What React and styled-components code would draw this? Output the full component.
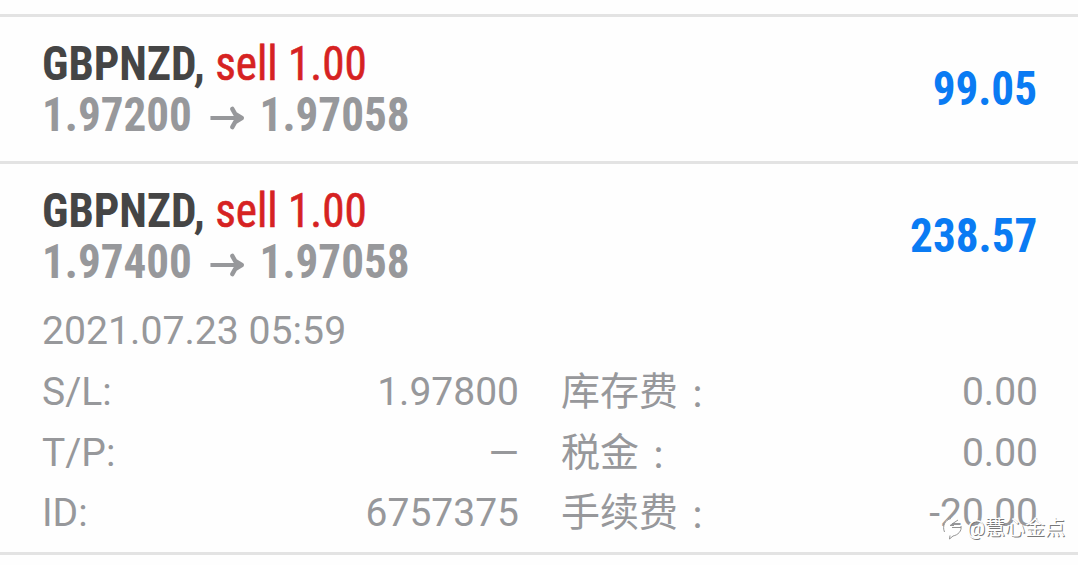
import React from 'react'
import styled, {createGlobalStyle} from 'styled-components'

const GlobalStyle = createGlobalStyle`
    body {
        margin: 0;
        background: #fefefe;
        overflow: hidden;
    }
`
const History = styled.main`
    position: relative;
    height: 551px;
    padding-top: 14px;
    overflow: hidden;
    font-family: Roboto, "Noto Sans CJK TC", sans-serif;
    color: #97989b;
`
const Deal = styled.section`
    box-sizing: border-box;
    height: ${props => props.$open ? '391px' : '147px'};
    border-top: 3px solid #e3e3e3;
    padding: 21px 41px 0 42px;
`
const Summary = styled.div`
    display: flex;
    justify-content: space-between;
    align-items: center;
    height: 102px;
    font-family: "Roboto Condensed", Roboto, sans-serif;
    font-stretch: condensed;
    font-size: 48px;
    line-height: 51px;
    white-space: nowrap;
`
const Order = styled.div`
    transform: scaleX(.94);
    transform-origin: left;
`
const Title = styled.div`
    font-weight: 700;
    color: #454545;
`
const Side = styled.span`
    font-weight: 400;
    color: #d62222;
    -webkit-text-stroke: .6px #d62222;
`
const Prices = styled.div`
    display: flex;
    align-items: center;
    height: 51px;
    font-weight: 700;
`
const Arrow = styled.svg`
    width: 36px;
    height: 24px;
    margin: 6px 17px 0 19px;
`
const Profit = styled.div`
    font-weight: 700;
    color: #0a7bf3;
    padding-bottom: 2px;
    transform: scaleX(.94);
    transform-origin: right;
`
const DateLine = styled.div`
    font-size: 39.2px;
    line-height: 60px;
    margin-top: 14px;
`
const Details = styled.div`
    display: grid;
    grid-template-columns: 477px 477px;
    column-gap: 42px;
    grid-auto-rows: 60.5px;
    font-size: 39px;
    line-height: 60px;
    padding-top: 1px;
`
const Item = styled.div`
    display: flex;
    justify-content: space-between;
    white-space: nowrap;
`
const Label = styled.span`
    display: flex;
    font-family: Roboto, "Noto Sans CJK SC", sans-serif;
`
const Colon = styled.span`
    width: 39px;
    padding-top: 3px;
    font-family: "Noto Sans CJK TC", sans-serif;
    font-size: 31px;
    line-height: 60px;
    text-align: center;
`
const EndLine = styled.div`
    height: 3px;
    background: #e3e3e3;
`
const Watermark = styled.div`
    position: absolute;
    left: 942px;
    top: 515px;
    display: flex;
    align-items: center;
    font-family: Roboto, "Noto Sans CJK SC", sans-serif;
    font-size: 20px;
    line-height: 26px;
    color: #fff;
    text-shadow: 1px 1px 0 #777;
    white-space: nowrap;
`
const Logo = styled.svg`
    width: 22px;
    height: 24px;
    margin-right: 3px;
`

const deals = [
    {
        symbol: 'GBPNZD', side: 'sell 1.00', open: '1.97200', close: '1.97058', profit: '99.05'
    },
    {
        symbol: 'GBPNZD', side: 'sell 1.00', open: '1.97400', close: '1.97058', profit: '238.57',
        date: '2021.07.23 05:59',
        details: [
            ['S/L:', '1.97800'],
            ['库存费', '0.00', true],
            ['T/P:', '—'],
            ['税金', '0.00', true],
            ['ID:', '6757375'],
            ['手续费', '-20.00', true]
        ]
    }
]

function DealRow({deal}) {
    return (
        <Deal $open={!!deal.details}>
            <Summary>
                <Order>
                    <Title>{deal.symbol}, <Side>{deal.side}</Side></Title>
                    <Prices>
                        {deal.open}
                        <Arrow viewBox="0 0 36 24" fill="none" stroke="#97989b">
                            <path d="M0 12H32" strokeWidth="4" />
                            <path d="M23.5 3L26.5 8L33.5 12L26.5 16L23.5 21" strokeWidth="4.6" strokeLinecap="round" strokeLinejoin="round" />
                        </Arrow>
                        {deal.close}
                    </Prices>
                </Order>
                <Profit>{deal.profit}</Profit>
            </Summary>
            {deal.details && <>
                <DateLine>{deal.date}</DateLine>
                <Details>
                    {deal.details.map(([label, value, wide]) =>
                        <Item key={label}>
                            <Label>{label}{wide && <Colon lang="zh-TW">：</Colon>}</Label>
                            <span>{value}</span>
                        </Item>
                    )}
                </Details>
            </>}
        </Deal>
    )
}

function App() {
    return (
        <History>
            <GlobalStyle />
            {deals.map((deal) => <DealRow key={deal.open} deal={deal} />)}
            <EndLine />
            <Watermark>
                <Logo viewBox="0 0 22 24" fill="none">
                    <path d="M3 17C-1 9 4 2 11 2L17 3L8 9H19C20 15 16 19 11 20L7 23L8 19L3 17Z" fill="#fff" />
                    <path d="M2.5 16C0 10 3 4 9 2.5M8 9.5H12M10 11.5H19M19 10C20 15 16 19 11 20L7.5 23L8 19.5M16 4L10 8" stroke="#888" strokeWidth=".9" />
                </Logo>
                @慧心金点
            </Watermark>
        </History>
    )
}

export default App
